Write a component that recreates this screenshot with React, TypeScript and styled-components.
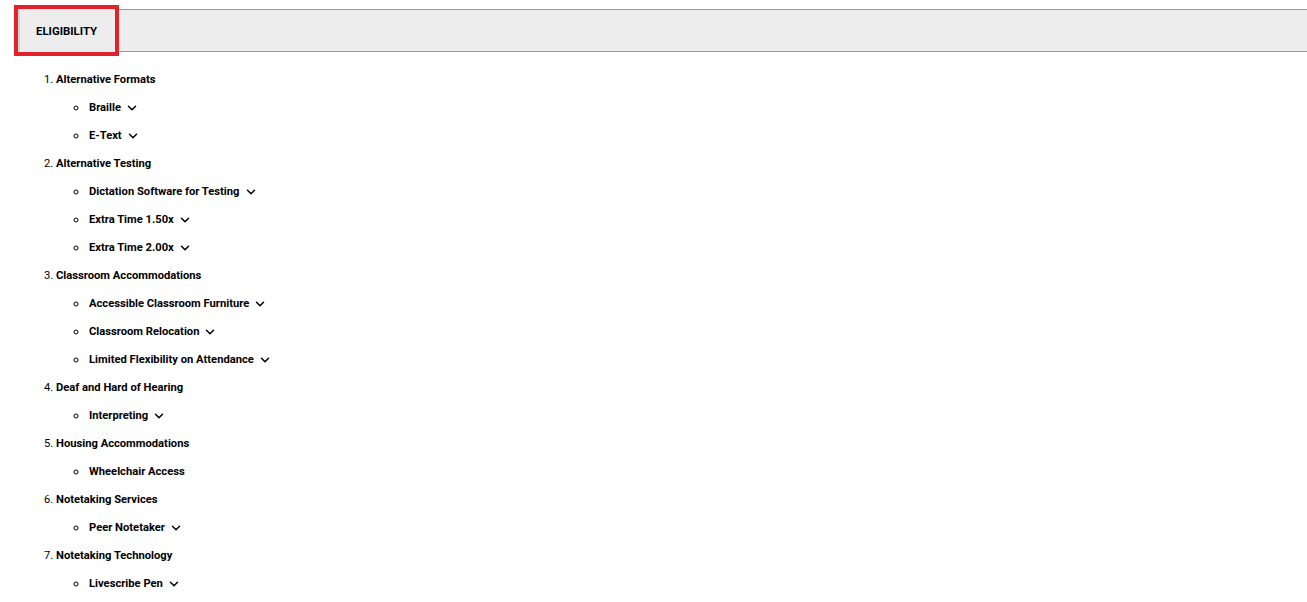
import React from "react";
import styled, { createGlobalStyle } from "styled-components";

const GlobalStyle = createGlobalStyle`
  html, body {
    margin: 0;
    padding: 0;
    background: #fff;
  }
  body {
    font-family: Roboto, "Liberation Sans", sans-serif;
    color: #000;
  }
`;

const Page = styled.div`
  padding-top: 9px;
`;

const TabBar = styled.div`
  display: flex;
  margin-left: 18px;
  height: 41px;
  background: #ededed;
  border-top: 1px solid #9a9a9a;
  border-bottom: 1px solid #9a9a9a;
`;

const Tab = styled.button<{ $active?: boolean }>`
  display: flex;
  align-items: center;
  margin: -1px 0;
  padding: 0 0 0 16px;
  height: 43px;
  width: 97px;
  background: #ededed;
  border: none;
  border-left: 2px solid #d4d4d4;
  font-family: Roboto, "Liberation Sans", sans-serif;
  font-size: 11.4px;
  font-weight: 700;
  color: #000;
  text-transform: uppercase;
  outline: ${(p) => (p.$active ? "4px solid #e3212a" : "none")};
  outline-offset: 0;
  position: relative;
  z-index: 1;
`;

const Categories = styled.ol`
  margin: 14px 0 0;
  padding-left: 56px;
  font-size: 11.2px;
  list-style: decimal;
  & > li::marker {
    font-weight: 400;
  }
`;

const Category = styled.li`
  line-height: 28px;
`;

const Label = styled.span`
  font-weight: 700;
`;

const Services = styled.ul`
  margin: 0;
  padding-left: 33px;
  list-style: circle;
`;

const Service = styled.li`
  font-size: 13px;
  line-height: 28px;
`;

const ServiceLabel = styled.span`
  display: inline-flex;
  align-items: center;
  vertical-align: top;
  height: 28px;
  gap: 6px;
  font-size: 11.2px;
  font-weight: 700;
`;

const Chevron = () => (
  <svg width="10" height="10" viewBox="0 0 10 10" aria-hidden="true">
    <path
      d="M1.5 3.2 L5 6.7 L8.5 3.2"
      fill="none"
      stroke="#000"
      strokeWidth="1.5"
      strokeLinecap="round"
      strokeLinejoin="round"
    />
  </svg>
);

type Item = { name: string; expandable: boolean };

const data: { name: string; items: Item[] }[] = [
  {
    name: "Alternative Formats",
    items: [
      { name: "Braille", expandable: true },
      { name: "E-Text", expandable: true },
    ],
  },
  {
    name: "Alternative Testing",
    items: [
      { name: "Dictation Software for Testing", expandable: true },
      { name: "Extra Time 1.50x", expandable: true },
      { name: "Extra Time 2.00x", expandable: true },
    ],
  },
  {
    name: "Classroom Accommodations",
    items: [
      { name: "Accessible Classroom Furniture", expandable: true },
      { name: "Classroom Relocation", expandable: true },
      { name: "Limited Flexibility on Attendance", expandable: true },
    ],
  },
  {
    name: "Deaf and Hard of Hearing",
    items: [{ name: "Interpreting", expandable: true }],
  },
  {
    name: "Housing Accommodations",
    items: [{ name: "Wheelchair Access", expandable: false }],
  },
  {
    name: "Notetaking Services",
    items: [{ name: "Peer Notetaker", expandable: true }],
  },
  {
    name: "Notetaking Technology",
    items: [{ name: "Livescribe Pen", expandable: true }],
  },
];

const App = () => (
  <Page>
    <GlobalStyle />
    <TabBar>
      <Tab $active>Eligibility</Tab>
    </TabBar>
    <Categories>
      {data.map((cat) => (
        <Category key={cat.name}>
          <Label>{cat.name}</Label>
          <Services>
            {cat.items.map((item) => (
              <Service key={item.name}>
                <ServiceLabel>
                  {item.name}
                  {item.expandable && <Chevron />}
                </ServiceLabel>
              </Service>
            ))}
          </Services>
        </Category>
      ))}
    </Categories>
  </Page>
);

export default App;
